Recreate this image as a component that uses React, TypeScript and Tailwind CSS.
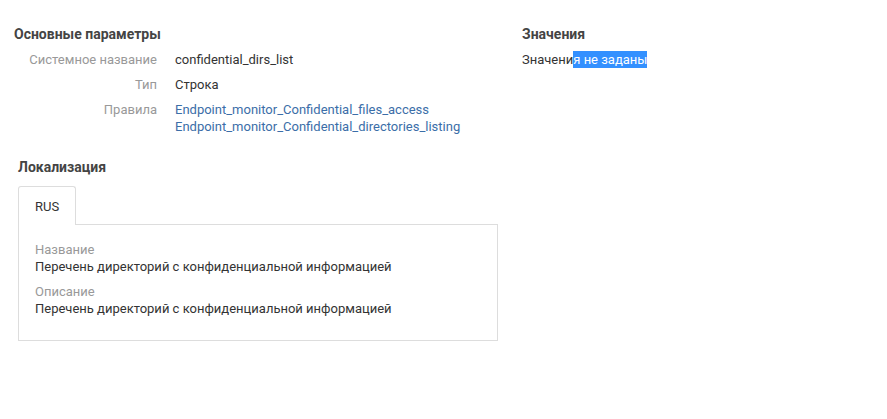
import React from "react";

type Row = {
  label: string;
  values: string[];
  link?: boolean;
};

const rows: Row[] = [
  { label: "Системное название", values: ["confidential_dirs_list"] },
  { label: "Тип", values: ["Строка"] },
  {
    label: "Правила",
    values: [
      "Endpoint_monitor_Confidential_files_access",
      "Endpoint_monitor_Confidential_directories_listing",
    ],
    link: true,
  },
];

const loc = [
  { label: "Название", value: "Перечень директорий с конфиденциальной информацией" },
  { label: "Описание", value: "Перечень директорий с конфиденциальной информацией" },
];

export default function App() {
  return (
    <div
      className="w-[887px] h-[419px] bg-white text-[13px] leading-[17px] text-[#333]"
      style={{ fontFamily: "Roboto, 'Liberation Sans', sans-serif" }}
    >
      <div className="flex pt-[26px]">
        {/* main params */}
        <div className="w-[508px] pl-[14px]">
          <div className="font-bold text-[14px] text-[#444] mb-[8px]">Основные параметры</div>
          <div className="flex flex-col gap-[8px]">
            {rows.map((row) => (
              <div key={row.label} className="flex">
                <div className="w-[143px] shrink-0 text-right text-[#999]">{row.label}</div>
                <div className="pl-[18px] flex flex-col">
                  {row.values.map((v) =>
                    row.link ? (
                      <a key={v} href="#" className="text-[#3b6ea8]">
                        {v}
                      </a>
                    ) : (
                      <span key={v}>{v}</span>
                    )
                  )}
                </div>
              </div>
            ))}
          </div>
        </div>

        {/* values */}
        <div className="pl-[14px]">
          <div className="font-bold text-[14px] text-[#444] mb-[8px]">Значения</div>
          <div>
            Значени<span className="bg-[#3390ff] text-white py-[1px]">я не заданы</span>
          </div>
        </div>
      </div>

      {/* localization */}
      <div className="pl-[18px] mt-[24px]">
        <div className="font-bold text-[14px] text-[#444] mb-[10px]">Локализация</div>
        <div className="w-[480px]">
          <div className="flex">
            <div className="relative -mb-px border border-b-0 border-[#ddd] rounded-t-[3px] bg-white px-[16px] h-[39px] flex items-center z-10">
              RUS
            </div>
          </div>
          <div className="border border-[#ddd] px-[16px] pt-[16px] pb-[23px]">
            {loc.map((item, i) => (
              <div key={item.label} className={i > 0 ? "mt-[8px]" : ""}>
                <div className="text-[#999]">{item.label}</div>
                <div>{item.value}</div>
              </div>
            ))}
          </div>
        </div>
      </div>
    </div>
  );
}
